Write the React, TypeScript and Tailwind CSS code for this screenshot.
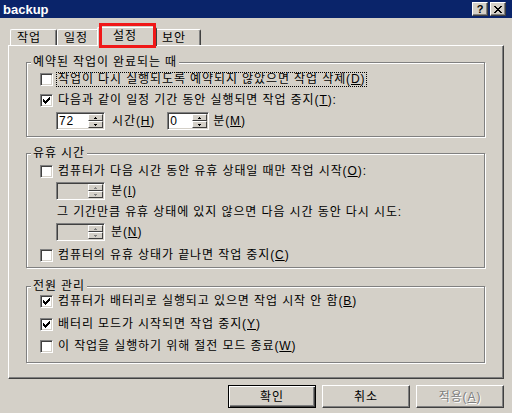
import React from 'react';

const CHECK_COLS = [2, 3, 4, 3, 2, 1, 0];
const X_ROWS = [
  [0, 1, 6, 7],
  [1, 2, 5, 6],
  [2, 3, 4, 5],
  [3, 4],
  [2, 3, 4, 5],
  [1, 2, 5, 6],
  [0, 1, 6, 7],
];

const CheckMark = () => (
  <svg width="7" height="7" viewBox="0 0 7 7" shapeRendering="crispEdges">
    {CHECK_COLS.map((y, x) => (
      <rect key={x} x={x} y={y} width="1" height="3" fill="#000" />
    ))}
  </svg>
);

const CheckBox = ({ checked }: { checked?: boolean }) => (
  <span className="flex h-[13px] w-[13px] shrink-0 items-center justify-center border border-t-[#808080] border-l-[#808080] border-b-white border-r-white bg-white shadow-[inset_1px_1px_0_#404040,inset_-1px_-1px_0_#d4d0c8]">
    {checked && <CheckMark />}
  </span>
);

const CheckRow = ({
  checked,
  focus,
  className,
  children,
}: {
  checked?: boolean;
  focus?: boolean;
  className?: string;
  children: React.ReactNode;
}) => (
  <div className={`flex h-[17px] items-center ${className ?? ''}`}>
    <CheckBox checked={checked} />
    <span
      className={`ml-[3px] border border-dotted px-[1px] leading-[13px] whitespace-nowrap ${
        focus ? 'border-black' : 'border-transparent'
      }`}
    >
      {children}
    </span>
  </div>
);

const SpinButton = ({ up, disabled }: { up?: boolean; disabled?: boolean }) => (
  <span className="flex h-[7px] items-center justify-center border border-t-white border-l-white border-r-[#404040] border-b-[#404040] bg-[#d4d0c8]">
    <svg width="3" height="2" viewBox="0 0 3 2" shapeRendering="crispEdges">
      <rect x="1" y={up ? 0 : 1} width="1" height="1" fill={disabled ? '#808080' : '#000'} />
      <rect x="0" y={up ? 1 : 0} width="3" height="1" fill={disabled ? '#808080' : '#000'} />
    </svg>
  </span>
);

const Spinner = ({
  value,
  disabled,
  className,
}: {
  value?: string;
  disabled?: boolean;
  className?: string;
}) => (
  <div
    className={`flex h-[18px] shrink-0 border border-t-[#808080] border-l-[#808080] border-b-white border-r-white p-[1px] shadow-[inset_1px_1px_0_#404040,inset_-1px_-1px_0_#d4d0c8] ${
      disabled ? 'bg-[#d4d0c8]' : 'bg-white'
    } ${className ?? ''}`}
  >
    <span className="flex-1 pl-[1px] leading-[14px]">{value}</span>
    <div className="flex w-[15px] flex-col">
      <SpinButton up disabled={disabled} />
      <SpinButton disabled={disabled} />
    </div>
  </div>
);

const Group = ({
  title,
  className,
  children,
}: {
  title: string;
  className?: string;
  children: React.ReactNode;
}) => (
  <div
    className={`relative ml-[17px] flex w-[459px] flex-col border border-[#808080] pl-[13px] shadow-[inset_1px_1px_0_#fff,1px_1px_0_#fff] ${
      className ?? ''
    }`}
  >
    <span className="absolute -top-[8px] left-[4px] bg-[#d4d0c8] px-[2px] leading-[14px] whitespace-nowrap">
      {title}
    </span>
    {children}
  </div>
);

const Tab = ({ label, className }: { label: string; className?: string }) => (
  <div
    className={`h-[16px] rounded-t-[2px] border-t border-l border-r border-t-white border-l-white border-r-[#404040] pl-[6px] leading-[17px] shadow-[inset_-1px_0_0_#808080] ${
      className ?? ''
    }`}
  >
    {label}
  </div>
);

const PushButton = ({
  children,
  isDefault,
  disabled,
}: {
  children: React.ReactNode;
  isDefault?: boolean;
  disabled?: boolean;
}) => (
  <div
    className={`flex h-[23px] w-[88px] items-center justify-center leading-[14px] ${
      isDefault
        ? 'border border-black shadow-[inset_1px_1px_0_#fff,inset_-1px_-1px_0_#404040,inset_-2px_-2px_0_#808080]'
        : 'border border-t-white border-l-white border-r-[#404040] border-b-[#404040] shadow-[inset_-1px_-1px_0_#808080]'
    } ${disabled ? 'text-[#808080] [text-shadow:1px_1px_0_#fff]' : ''}`}
  >
    {children}
  </div>
);

const TitleButton = ({ children, className }: { children: React.ReactNode; className?: string }) => (
  <div
    className={`flex h-[14px] w-[16px] items-center justify-center border border-t-white border-l-white border-r-[#404040] border-b-[#404040] bg-[#d4d0c8] shadow-[inset_-1px_-1px_0_#808080] ${
      className ?? ''
    }`}
  >
    {children}
  </div>
);

export default function App() {
  return (
    <div className="relative flex h-[413px] w-[512px] flex-col overflow-hidden bg-[#d4d0c8] font-['Liberation_Sans','Noto_Sans_CJK_KR',sans-serif] text-[12px] tracking-[0.9px] text-black">
      {/* title bar */}
      <div className="flex h-[18px] shrink-0 items-center bg-[#0a246a] pl-[3px] pr-[6px] tracking-normal">
        <span className="flex-1 text-[13px] leading-none font-bold text-white">backup</span>
        <TitleButton>
          <span className="text-[11px] leading-none font-bold">?</span>
        </TitleButton>
        <TitleButton className="ml-[2px]">
          <svg width="8" height="7" viewBox="0 0 8 7" shapeRendering="crispEdges">
            {X_ROWS.map((xs, y) =>
              xs.map((x) => <rect key={`${x}-${y}`} x={x} y={y} width="1" height="1" fill="#000" />)
            )}
          </svg>
        </TitleButton>
      </div>

      {/* tabs */}
      <div className="mt-[9px] flex h-[18px] shrink-0 items-end pl-[10px]">
        <Tab label="작업" className="w-[47px]" />
        <Tab label="일정" className="w-[42px]" />
        <div className="relative z-10 -mx-[2px] -mb-[1px] h-[19px] w-[60px] rounded-t-[2px] border-t border-l border-r border-t-white border-l-white border-r-[#404040] bg-[#d4d0c8] pl-[15px] leading-[17px] shadow-[inset_-1px_0_0_#808080]">
          설정
        </div>
        <Tab label="보안" className="w-[46px]" />
      </div>

      {/* panel */}
      <div className="ml-[8px] flex h-[334px] w-[496px] shrink-0 flex-col border border-t-white border-l-white border-r-[#404040] border-b-[#404040] shadow-[inset_-1px_-1px_0_#808080]">
        <Group title="예약된 작업이 완료되는 때" className="mt-[16px] h-[75px]">
          <CheckRow focus className="mt-[8px]">
            작업이 다시 실행되도록 예약되지 않았으면 작업 삭제(<u>D</u>)
          </CheckRow>
          <CheckRow checked className="mt-[4px]">
            다음과 같이 일정 기간 동안 실행되면 작업 중지(<u>T</u>):
          </CheckRow>
          <div className="mt-[3px] flex items-center">
            <Spinner value="72" className="ml-[16px] w-[49px]" />
            <span className="ml-[7px] leading-[14px]">
              시간(<u>H</u>)
            </span>
            <Spinner value="0" className="ml-[12px] w-[42px]" />
            <span className="ml-[4px] leading-[14px]">
              분(<u>M</u>)
            </span>
          </div>
        </Group>

        <Group title="유휴 시간" className="mt-[16px] h-[115px]">
          <CheckRow className="mt-[9px]">
            컴퓨터가 다음 시간 동안 유휴 상태일 때만 작업 시작(<u>O</u>):
          </CheckRow>
          <div className="mt-[2px] flex items-center">
            <Spinner disabled className="ml-[16px] w-[49px]" />
            <span className="ml-[6px] leading-[14px]">
              분(<u>I</u>)
            </span>
          </div>
          <div className="mt-[4px] ml-[17px] h-[17px] leading-[17px] whitespace-nowrap">
            그 기간만큼 유휴 상태에 있지 않으면 다음 시간 동안 다시 시도:
          </div>
          <div className="mt-[2px] flex items-center">
            <Spinner disabled className="ml-[16px] w-[49px]" />
            <span className="ml-[6px] leading-[14px]">
              분(<u>N</u>)
            </span>
          </div>
          <CheckRow className="mt-[6px]">
            컴퓨터의 유휴 상태가 끝나면 작업 중지(<u>C</u>)
          </CheckRow>
        </Group>

        <Group title="전원 관리" className="mt-[18px] h-[77px]">
          <CheckRow checked className="mt-[6px]">
            컴퓨터가 배터리로 실행되고 있으면 작업 시작 안 함(<u>B</u>)
          </CheckRow>
          <CheckRow checked className="mt-[6px]">
            배터리 모드가 시작되면 작업 중지(<u>Y</u>)
          </CheckRow>
          <CheckRow className="mt-[5px]">
            이 작업을 실행하기 위해 절전 모드 종료(<u>W</u>)
          </CheckRow>
        </Group>
      </div>

      {/* buttons */}
      <div className="mt-[6px] flex justify-end gap-[6px] pr-[8px]">
        <PushButton isDefault>확인</PushButton>
        <PushButton>취소</PushButton>
        <PushButton disabled>
          적용(<u>A</u>)
        </PushButton>
      </div>

      {/* red annotation box */}
      <div className="pointer-events-none absolute top-[23px] left-[99px] z-20 h-[25px] w-[57px] border-[3px] border-[#f01818]" />
    </div>
  );
}
